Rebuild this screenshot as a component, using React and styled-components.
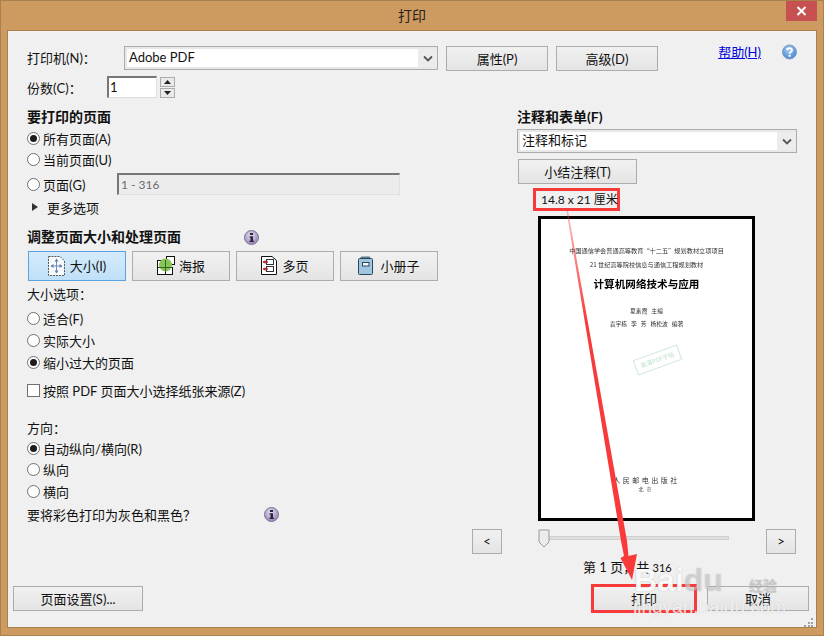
import React from 'react';
import styled, { createGlobalStyle } from 'styled-components';

const GlobalStyle = createGlobalStyle`
  html, body {
    margin: 0;
    padding: 0;
    background: #cd9a60;
  }
  * { box-sizing: border-box; }
`;

const Dialog = styled.div`
  position: relative;
  width: 824px;
  height: 636px;
  display: flex;
  flex-direction: column;
  background: #cd9a60;
  border: 1px solid #a9814f;
  overflow: hidden;
  font-family: Lato, "Noto Sans CJK SC", sans-serif;
  font-size: 13px;
  color: #111;
`;

const TitleBar = styled.div`
  height: 29px;
  flex: none;
  display: flex;
  align-items: center;
  justify-content: center;
  padding-bottom: 2px;
  font-size: 14px;
  color: #2a2118;
`;

const CloseButton = styled.div`
  position: absolute;
  top: 0;
  right: 6px;
  width: 31px;
  height: 20px;
  background: #c75050;
  display: flex;
  align-items: center;
  justify-content: center;
`;

const Body = styled.div`
  flex: 1;
  margin: 0 6px 7px;
  border: 1px solid #a9814f;
  background: #f0f0f0;
  display: flex;
  flex-direction: column;
  padding: 15px 19px 0;
`;

const TopRow = styled.div`
  display: flex;
  align-items: flex-start;
  height: 25px;
`;

const FieldLabel = styled.div`
  width: ${(p) => p.$width}px;
  height: 24px;
  line-height: 24px;
  flex: none;
`;

const Select = styled.div`
  width: ${(p) => p.$width}px;
  height: 24px;
  flex: none;
  display: flex;
  align-items: stretch;
  border: 1px solid #acacac;
  background: #e8e8e8;
  padding: 2px 0 2px 2px;
`;

const AnnotSelect = styled(Select)`
  margin: 2px 0 0 45px;
`;

const SelectValue = styled.div`
  flex: 1;
  background: #fff;
  line-height: 17px;
  padding-left: 2px;
`;

const SelectArrow = styled.div`
  width: 19px;
  display: flex;
  align-items: center;
  justify-content: center;
  background: #ececec;
`;

const Button = styled.div`
  width: ${(p) => p.$width}px;
  height: ${(p) => p.$height || 25}px;
  flex: none;
  display: flex;
  align-items: center;
  justify-content: center;
  gap: ${(p) => p.$gap || 4}px;
  padding-bottom: 1px;
  border: 1px solid ${(p) => (p.$active ? '#5aa3e0' : '#acacac')};
  background: ${(p) =>
    p.$active
      ? 'linear-gradient(#d5ebfb, #bfe0f8)'
      : 'linear-gradient(#f1f1f1, #e4e4e4)'};
  outline: ${(p) => (p.$marked ? '3px solid #f93a3a' : 'none')};
  outline-offset: -1px;
`;

const PropsButton = styled(Button)`
  margin-left: 8px;
`;

const HelpLink = styled.a`
  margin-left: auto;
  margin-top: -4px;
  line-height: 20px;
  color: #0000e0;
  text-decoration: underline;
`;

const HelpIcon = styled.svg`
  margin-left: 21px;
  margin-top: -2px;
  flex: none;
`;

const CopiesRow = styled.div`
  display: flex;
  align-items: flex-start;
  margin-top: 5px;
  height: 22px;
`;

const CopiesInput = styled.div`
  width: 50px;
  height: 22px;
  background: #fff;
  border: 1px solid #dcdcdc;
  border-top: 2px solid #777;
  border-left: 2px solid #777;
  line-height: 18px;
  padding-left: 1px;
`;

const Spinner = styled.div`
  margin-left: 3px;
  margin-top: 1px;
  width: 15px;
  display: flex;
  flex-direction: column;
  gap: 1px;
`;

const SpinButton = styled.div`
  height: 10px;
  border: 1px solid #acacac;
  background: #eaeaea;
  display: flex;
  align-items: center;
  justify-content: center;
`;

const Main = styled.div`
  flex: 1;
  display: flex;
  margin-top: 9px;
`;

const LeftColumn = styled.div`
  width: 411px;
  flex: none;
  display: flex;
  flex-direction: column;
`;

const RightColumn = styled.div`
  width: 325px;
  margin-left: 34px;
  flex: none;
  display: flex;
  flex-direction: column;
`;

const Heading = styled.div`
  height: 20px;
  line-height: 20px;
  font-size: 14px;
  font-weight: 700;
  margin-top: ${(p) => p.$top || 0}px;
  margin-left: ${(p) => p.$left || 0}px;
  display: flex;
  align-items: center;
`;

const Row = styled.div`
  height: ${(p) => p.$height || 22}px;
  margin-top: ${(p) => p.$top || 0}px;
  display: flex;
  align-items: center;
  white-space: nowrap;
`;

const Radio = styled.span`
  width: 13px;
  height: 13px;
  flex: none;
  margin-right: 3px;
  border-radius: 50%;
  border: 1px solid #707070;
  background: #fff;
  display: flex;
  align-items: center;
  justify-content: center;
  &::after {
    content: '';
    width: 7px;
    height: 7px;
    border-radius: 50%;
    background: ${(p) => (p.$checked ? '#1c1c1c' : 'transparent')};
  }
`;

const CheckBox = styled.span`
  width: 13px;
  height: 13px;
  flex: none;
  margin-right: 3px;
  border: 1px solid #707070;
  background: #fff;
`;

const RangeLabel = styled.span`
  width: 74px;
  flex: none;
`;

const RangeInput = styled.div`
  width: 283px;
  height: 22px;
  background: #ececec;
  border: 1px solid #e0e0e0;
  border-top: 2px solid #777;
  border-left: 2px solid #777;
  color: #6d6d6d;
  line-height: 19px;
  padding-left: 2px;
  font-size: 12px;
`;

const Triangle = styled.span`
  width: 0;
  height: 0;
  margin-left: 5px;
  margin-right: 9px;
  border-left: 6px solid #333;
  border-top: 4px solid transparent;
  border-bottom: 4px solid transparent;
`;

const InfoIcon = styled.svg`
  margin-left: ${(p) => p.$left}px;
  flex: none;
`;

const ModeRow = styled.div`
  display: flex;
  gap: 6px;
  margin: 4px 0 0 1px;
`;

const SizeOption = styled.div`
  height: 20px;
  line-height: 20px;
  margin-top: ${(p) => p.$top || 0}px;
`;

const SummaryButton = styled(Button)`
  margin: 6px 0 0 46px;
`;

const SizeBadge = styled.div`
  width: 87px;
  height: 23px;
  margin: 4px 0 0 61px;
  border: 3px solid #f93a3a;
  line-height: 18px;
  font-size: 12px;
  padding-left: 5px;
  white-space: nowrap;
`;

const PreviewPage = styled.div`
  position: relative;
  width: 217px;
  height: 305px;
  margin: 5px 0 0 66px;
  border: 3px solid #000;
  background: #fff;
  color: #222;
  display: flex;
  flex-direction: column;
  align-items: center;
  padding-top: 28px;
  white-space: pre;
  font-family: "Noto Sans CJK SC", sans-serif;
  filter: blur(0.3px);
`;

const PageLine = styled.div`
  font-size: ${(p) => p.$size}px;
  line-height: ${(p) => p.$size + 2}px;
  margin-top: ${(p) => p.$top || 0}px;
  font-weight: ${(p) => (p.$bold ? 700 : 400)};
  letter-spacing: ${(p) => p.$spacing || 0}px;
  color: ${(p) => (p.$bold ? '#000' : '#333')};
`;

const PublisherBlock = styled.div`
  margin-top: auto;
  margin-bottom: 26px;
  display: flex;
  flex-direction: column;
  align-items: center;
`;

const Stamp = styled.div`
  position: absolute;
  left: 93px;
  top: 133px;
  width: 47px;
  height: 16px;
  border: 1px solid #cfe8d8;
  color: #bfe0cc;
  font-size: 6px;
  line-height: 14px;
  text-align: center;
  transform: rotate(-20deg);
`;

const Pager = styled.div`
  display: flex;
  align-items: center;
  height: 25px;
  margin-top: 8px;
`;

const Slider = styled.div`
  position: relative;
  width: 190px;
  height: 4px;
  margin: -7px 37px 0;
  background: #dedede;
  border: 1px solid #d0d0d0;
`;

const SliderThumb = styled.svg`
  position: absolute;
  left: -2px;
  top: -8px;
`;

const PageCount = styled.div`
  width: 90px;
  margin: 2px 0 0 111px;
  height: 22px;
  line-height: 22px;
  overflow: hidden;
  white-space: nowrap;
  font-size: 13px;
`;

const PageTotal = styled.span`
  font-size: 11px;
`;

const Footer = styled.div`
  display: flex;
  align-items: center;
  margin: 0 -12px 16px -14px;
  height: 25px;
`;

const FooterRight = styled.div`
  margin-left: auto;
  display: flex;
  gap: 12px;
`;

const Overlay = styled.svg`
  position: absolute;
  left: -1px;
  top: -1px;
  pointer-events: none;
`;

const BaiduMark = styled.div`
  position: absolute;
  left: 633px;
  top: 563px;
  width: 180px;
  pointer-events: none;
  line-height: 1;
  white-space: nowrap;
  font-family: "Liberation Sans", "Noto Sans CJK SC", sans-serif;
`;

const BaiduWord = styled.div`
  display: flex;
  align-items: baseline;
  font-weight: 700;
  font-size: 32px;
  color: rgba(255, 255, 255, 0.95);
  text-shadow: 0 0 1px rgba(110, 110, 110, 0.55);
`;

const BaiduFaded = styled.span`
  color: rgba(255, 255, 255, 0.45);
`;

const BaiduCn = styled.span`
  margin-left: 26px;
  font-size: 14px;
  color: rgba(255, 255, 255, 0.3);
`;

const BaiduUrl = styled.div`
  font-size: 19px;
  margin-top: 1px;
  margin-left: -1px;
  color: rgba(255, 255, 255, 0.78);
  text-shadow: 0 0 1px rgba(110, 110, 110, 0.35);
`;

const Chevron = () => (
  <svg width="10" height="7" viewBox="0 0 10 7">
    <path d="M1 1.5 5 5.5 9 1.5" fill="none" stroke="#555" strokeWidth="1.8" />
  </svg>
);

const Info = ({ left }) => (
  <InfoIcon $left={left} width="15" height="15" viewBox="0 0 15 15">
    <defs>
      <radialGradient id="infoFill" cx="45%" cy="35%" r="70%">
        <stop offset="0" stopColor="#e6def0" />
        <stop offset="1" stopColor="#8f7fb0" />
      </radialGradient>
    </defs>
    <circle cx="7.5" cy="7.5" r="7" fill="url(#infoFill)" stroke="#7c7296" />
    <rect x="6" y="3" width="3" height="2" fill="#2d2440" />
    <path d="M5.5 6.2H9V10.8H10V12H5.5V10.8H6.5V7.4H5.5Z" fill="#2d2440" />
  </InfoIcon>
);

const SizeIcon = () => (
  <svg width="17" height="20" viewBox="0 0 17 20">
    <path d="M.5.5H12L16.5 5V19.5H.5Z" fill="#f8fbfe" stroke="#555" strokeDasharray="2 1" />
    <path d="M8.5 3V17M3 10H14" stroke="#6f8fb8" strokeWidth="1" />
    <path d="M8.5 2.5 6.5 5.5H10.5ZM8.5 17.5 6.5 14.5H10.5ZM2.5 10 5.5 8V12ZM14.5 10 11.5 8V12Z" fill="#5f80ac" />
  </svg>
);

const PosterIcon = () => (
  <svg width="18" height="19" viewBox="0 0 18 19">
    <rect x=".5" y="4.5" width="8" height="7" fill="#fff" stroke="#111" />
    <rect x=".5" y="11.5" width="8" height="7" fill="#fff" stroke="#111" />
    <rect x="8.5" y="11.5" width="7" height="7" fill="#fff" stroke="#111" />
    <rect x="9.5" y=".5" width="8" height="8" fill="#fff" stroke="#111" />
    <circle cx="8.5" cy="9" r="6.5" fill="#86c556" />
    <path d="M2 11.5H15M8.5 4V15.5" stroke="#3b5f22" strokeWidth="1" />
  </svg>
);

const MultiIcon = () => (
  <svg width="16" height="19" viewBox="0 0 16 19">
    <path d="M.5.5H11L15.5 4.5V18.5H.5Z" fill="#fff" stroke="#111" />
    <rect x="5.5" y="3.5" width="7" height="5" fill="#fff" stroke="#333" />
    <rect x="5.5" y="10.5" width="7" height="5" fill="#fff" stroke="#333" />
    <path d="M2 6H7M2 13H7" stroke="#c0262a" strokeWidth="1.5" />
    <path d="M2 6 4.5 4V8ZM2 13 4.5 11V15Z" fill="#c0262a" />
  </svg>
);

const BookletIcon = () => (
  <svg width="15" height="19" viewBox="0 0 15 19">
    <path d="M1 3 3.5.5H12V2.5H2.5Z" fill="#5a7c94" />
    <rect x=".5" y="2.5" width="14" height="16" rx="1" fill="#9fc6e0" stroke="#2c4656" />
    <rect x="4.5" y="6.5" width="6.5" height="3.5" fill="#f4f8fb" stroke="#2c4656" />
  </svg>
);

export default function App() {
  return (
    <Dialog>
      <GlobalStyle />
      <TitleBar>打印</TitleBar>
      <CloseButton>
        <svg width="11" height="10" viewBox="0 0 11 10">
          <path d="M1.5 1 9.5 9M9.5 1 1.5 9" stroke="#fff" strokeWidth="2" />
        </svg>
      </CloseButton>

      <Body>
        <TopRow>
          <FieldLabel $width={97}>打印机(N)：</FieldLabel>
          <Select $width={314}>
            <SelectValue>Adobe PDF</SelectValue>
            <SelectArrow><Chevron /></SelectArrow>
          </Select>
          <PropsButton $width={102}>属性(P)</PropsButton>
          <PropsButton $width={102}>高级(D)</PropsButton>
          <HelpLink>帮助(H)</HelpLink>
          <HelpIcon width="15" height="16" viewBox="0 0 15 16">
            <defs>
              <radialGradient id="helpFill" cx="45%" cy="35%" r="70%">
                <stop offset="0" stopColor="#a8d0f4" />
                <stop offset="1" stopColor="#3f80cc" />
              </radialGradient>
            </defs>
            <circle cx="7.5" cy="8" r="7" fill="url(#helpFill)" stroke="#7d9dc4" />
            <path d="M5 6.2C5 3.6 10 3.6 10 6.2 10 8 7.6 8 7.6 9.8" fill="none" stroke="#fff" strokeWidth="1.8" />
            <rect x="6.6" y="10.8" width="2" height="2" fill="#fff" />
          </HelpIcon>
        </TopRow>

        <CopiesRow>
          <FieldLabel $width={80}>份数(C)：</FieldLabel>
          <CopiesInput>1</CopiesInput>
          <Spinner>
            <SpinButton>
              <svg width="7" height="4" viewBox="0 0 7 4"><path d="M3.5 0 7 4H0Z" fill="#222" /></svg>
            </SpinButton>
            <SpinButton>
              <svg width="7" height="4" viewBox="0 0 7 4"><path d="M0 0H7L3.5 4Z" fill="#222" /></svg>
            </SpinButton>
          </Spinner>
        </CopiesRow>

        <Main>
          <LeftColumn>
            <Heading>要打印的页面</Heading>
            <Row><Radio $checked />所有页面(A)</Row>
            <Row $height={21}><Radio />当前页面(U)</Row>
            <Row $top={3}>
              <Radio /><RangeLabel>页面(G)</RangeLabel>
              <RangeInput>1 - 316</RangeInput>
            </Row>
            <Row $top={1}><Triangle />更多选项</Row>

            <Heading $top={9}>
              调整页面大小和处理页面
              <Info left={63} />
            </Heading>
            <ModeRow>
              <Button $width={98} $height={30} $active $gap={5}><SizeIcon />大小(I)</Button>
              <Button $width={98} $height={30}><PosterIcon />海报</Button>
              <Button $width={98} $height={30} $gap={5}><MultiIcon />多页</Button>
              <Button $width={98} $height={30} $gap={7}><BookletIcon />小册子</Button>
            </ModeRow>
            <SizeOption $top={3}>大小选项：</SizeOption>
            <Row $top={3}><Radio />适合(F)</Row>
            <Row><Radio />实际大小</Row>
            <Row><Radio $checked />缩小过大的页面</Row>
            <Row $top={6}><CheckBox />按照 PDF 页面大小选择纸张来源(Z)</Row>

            <SizeOption $top={17}>方向：</SizeOption>
            <Row $top={-1}><Radio $checked />自动纵向/横向(R)</Row>
            <Row $height={21}><Radio />纵向</Row>
            <Row><Radio />横向</Row>
            <Row $height={20} $top={2}>
              要将彩色打印为灰色和黑色？
              <Info left={68} />
            </Row>
          </LeftColumn>

          <RightColumn>
            <Heading $left={45}>注释和表单(F)</Heading>
            <AnnotSelect $width={280}>
              <SelectValue>注释和标记</SelectValue>
              <SelectArrow><Chevron /></SelectArrow>
            </AnnotSelect>
            <SummaryButton $width={119}>小结注释(T)</SummaryButton>
            <SizeBadge>14.8 x 21 厘米</SizeBadge>
            <PreviewPage>
              <PageLine $size={6.2}>中国通信学会普通高等教育“十二五”规划教材立项项目</PageLine>
              <PageLine $size={6.2} $top={6}>21 世纪高等院校信息与通信工程规划教材</PageLine>
              <PageLine $size={10.6} $top={9} $bold>计算机网络技术与应用</PageLine>
              <PageLine $size={5.8} $top={16}>夏素霞   主编</PageLine>
              <PageLine $size={5.8} $top={5}>袁宇栋   李   芳   杨松波   编著</PageLine>
              <Stamp>高清PDF字帖</Stamp>
              <PublisherBlock>
                <PageLine $size={7} $spacing={2.5}>人民邮电出版社</PageLine>
                <PageLine $size={5} $spacing={3}>北京</PageLine>
              </PublisherBlock>
            </PreviewPage>
            <Pager>
              <Button $width={30}>&lt;</Button>
              <Slider>
                <SliderThumb width="12" height="19" viewBox="0 0 12 19">
                  <path d="M1 1H11V13L6 18 1 13Z" fill="#ececec" stroke="#9a9a9a" />
                </SliderThumb>
              </Slider>
              <Button $width={30}>&gt;</Button>
            </Pager>
            <PageCount>第 1 页，共 <PageTotal>316</PageTotal> 页</PageCount>
          </RightColumn>
        </Main>

        <Footer>
          <Button $width={130}>页面设置(S)...</Button>
          <FooterRight>
            <Button $width={102} $marked>打印</Button>
            <Button $width={102}>取消</Button>
          </FooterRight>
        </Footer>
      </Body>

      <BaiduMark>
        <BaiduWord>Bai<BaiduFaded>du</BaiduFaded><BaiduCn>经验</BaiduCn></BaiduWord>
        <BaiduUrl>jingyan.baidu.com</BaiduUrl>
      </BaiduMark>

      <Overlay width="824" height="636" viewBox="0 0 824 636">
        <defs>
          <linearGradient id="arrowFade" x1="0" y1="0" x2="0" y2="1">
            <stop offset="0" stopColor="#f93a3a" stopOpacity="0.35" />
            <stop offset="0.3" stopColor="#f93a3a" />
          </linearGradient>
        </defs>
        <path d="M566.5 211 568 211 627 541 628.5 556 637 554 632 580 620.5 558 624 556 621 541Z" fill="url(#arrowFade)" />
        <g fill="#a0a0a0">
          <rect x="811" y="618" width="2" height="2" />
          <rect x="808" y="622" width="2" height="2" />
          <rect x="811" y="622" width="2" height="2" />
          <rect x="804" y="625" width="2" height="2" />
          <rect x="808" y="625" width="2" height="2" />
          <rect x="811" y="625" width="2" height="2" />
        </g>
      </Overlay>
    </Dialog>
  );
}
